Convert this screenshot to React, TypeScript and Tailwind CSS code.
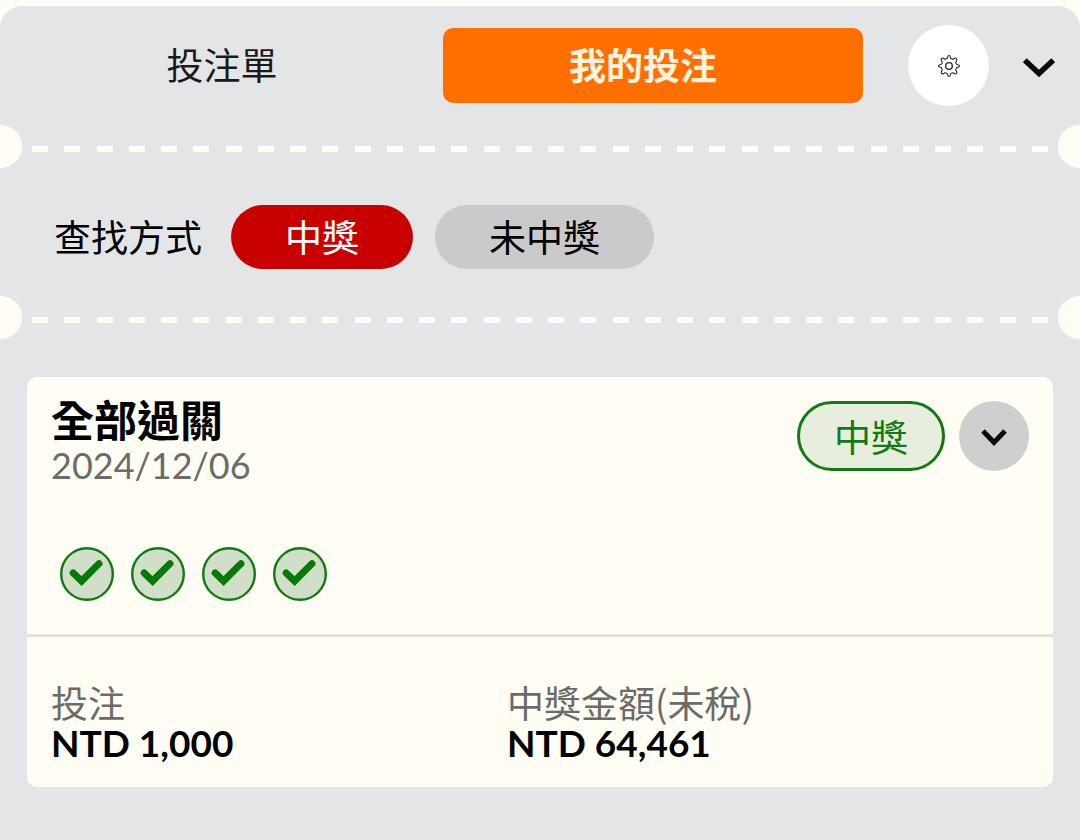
import React, { useState } from "react";
import clsx from "clsx";

const DASHES = Array.from({ length: 32 });
const LEGS = [1, 2, 3, 4];

const details = [
  { label: "投注", value: "NTD 1,000" },
  { label: "中獎金額(未稅)", value: "NTD 64,461" },
];

const GearIcon = () => (
  <svg viewBox="0 0 24 24" className="size-6" fill="none" stroke="#222" strokeWidth="1.1" strokeLinejoin="round" aria-hidden="true">
    <path d="M10.7 3.2Q10.8 1.5 12 1.5T13.3 3.2Q13.5 4.6 14.9 5.1Q16 5.5 17.1 4.5Q18.5 3.5 19.4 4.5T19.4 6.9Q18.4 8 18.9 9.1Q19.4 10.5 20.8 10.7Q22.5 10.8 22.5 12T20.8 13.3Q19.4 13.5 18.9 14.9Q18.4 16 19.4 17.1Q20.4 18.5 19.4 19.4T17.1 19.5Q16 18.5 14.9 18.9Q13.5 19.4 13.3 20.8Q13.2 22.5 12 22.5T10.7 20.8Q10.5 19.4 9.1 18.9Q8 18.5 6.9 19.5Q5.5 20.4 4.6 19.4T4.6 17.1Q5.6 16 5.1 14.9Q4.6 13.5 3.2 13.3Q1.5 13.2 1.5 12T3.2 10.7Q4.6 10.5 5.1 9.1Q5.6 8 4.6 6.9Q3.6 5.5 4.6 4.5T6.9 4.5Q8 5.5 9.1 5.1Q10.5 4.6 10.7 3.2Z" />
    <circle cx="12" cy="12" r="3.3" strokeWidth="1.3" />
  </svg>
);

const CheckBadge = () => (
  <svg viewBox="0 0 54 54" className="size-[54px]" fill="none" aria-hidden="true">
    <circle cx="27" cy="27" r="25.8" fill="#d2dfc8" stroke="#107a13" strokeWidth="2.4" />
    <path d="M13.2 26L21.6 34L39 16.6" stroke="#047a04" strokeWidth="7" strokeLinecap="round" strokeLinejoin="miter" />
  </svg>
);

// Ticket-style tear line with a notch on both edges
const TearLine = () => (
  <div className="flex h-[43px] items-center gap-[10px] overflow-hidden" aria-hidden="true">
    <span className="-ml-[21px] size-[43px] shrink-0 rounded-full bg-[#fffdf4]" />
    <div className="flex flex-1 justify-between pt-[5px]">
      {DASHES.map((_, i) => (
        <span key={i} className="h-[6px] w-4 bg-[#fffdf4]" />
      ))}
    </div>
    <span className="-mr-[21px] size-[43px] shrink-0 rounded-full bg-[#fffdf4]" />
  </div>
);

const App = () => {
  const [tab, setTab] = useState("mine");
  const [filter, setFilter] = useState("won");

  const tabClass = (name: string) =>
    clsx(
      "h-[75px] rounded-[10px] text-[37px] leading-[44px]",
      tab === name ? "bg-[#ff6f00] pr-5 font-bold text-[#fff3e0]" : "text-[#1a1a1a]"
    );

  const filterClass = (name: string) =>
    clsx(
      "h-16 rounded-full px-[54px] pt-[2px]",
      filter === name ? "bg-[#c80000] text-white" : "bg-[#cacaca] text-black"
    );

  return (
    <div className="min-h-screen bg-[#fffdf4] pt-[6px] font-[Lato,'Noto_Sans_CJK_TC',sans-serif] text-black">
      <div className="min-h-[calc(100vh-6px)] rounded-t-[22px] bg-[#e4e5e7] pb-12">
        {/* Header */}
        <header className="flex items-center pt-[19px] pr-[25px] pb-[19px] pl-3">
          <div className="grid flex-1 grid-cols-2 gap-[11px]">
            <button type="button" onClick={() => setTab("slip")} className={tabClass("slip")}>
              投注單
            </button>
            <button type="button" onClick={() => setTab("mine")} className={tabClass("mine")}>
              我的投注
            </button>
          </div>
          <button
            type="button"
            aria-label="設定"
            className="ml-[45px] flex size-[81px] items-center justify-center rounded-full bg-white"
          >
            <GearIcon />
          </button>
          <button type="button" aria-label="收合" className="ml-[34px] pt-1">
            <svg viewBox="0 0 32 20" className="h-5 w-8" fill="none" stroke="#0a0a0a" strokeWidth="5.6" aria-hidden="true">
              <path d="M1.8 2.2L16 15.5L30.2 2.2" />
            </svg>
          </button>
        </header>

        <TearLine />

        {/* Filter */}
        <div className="flex items-center pt-[37px] pb-[27px] pl-[54px] text-[37px] leading-[44px]">
          <span className="mr-[29px] pt-[2px]">查找方式</span>
          <div className="flex gap-[22px]">
            <button type="button" onClick={() => setFilter("won")} className={filterClass("won")}>
              中獎
            </button>
            <button type="button" onClick={() => setFilter("lost")} className={filterClass("lost")}>
              未中獎
            </button>
          </div>
        </div>

        <TearLine />

        {/* Bet card */}
        <article className="mx-[27px] mt-[38px] rounded-[10px] bg-[#fffdf4]">
          <div className="flex items-start justify-between px-6 pt-[22px]">
            <div>
              <h2 className="text-[43px] leading-[44px] font-bold">全部過關</h2>
              <p className="text-[36px] leading-[44px] text-[#6b6b68]">2024/12/06</p>
            </div>
            <div className="flex items-center gap-[14px] pt-[2px]">
              <span className="flex h-[70px] items-center rounded-full border-3 border-[#107a13] bg-[#e7eedd] px-[34px] pt-[3px] text-[37px] leading-[44px] text-[#107a13]">
                中獎
              </span>
              <button
                type="button"
                aria-label="展開"
                className="flex size-[70px] items-center justify-center rounded-full bg-[#cfcfcf] pt-[3px]"
              >
                <svg viewBox="0 0 26 18" className="h-[18px] w-[26px]" fill="none" stroke="#0a0a0a" strokeWidth="5" aria-hidden="true">
                  <path d="M2 2L13 13.4L24 2" />
                </svg>
              </button>
            </div>
          </div>

          <div className="mt-[60px] flex gap-[17px] pb-[33px] pl-[33px]">
            {LEGS.map((leg) => (
              <CheckBadge key={leg} />
            ))}
          </div>

          <dl className="grid grid-cols-[456px_1fr] border-t-3 border-[#e4e3dc] px-6 pt-[45px] pb-6">
            {details.map((item) => (
              <div key={item.label} className="flex flex-col gap-px">
                <dt className="font-['Noto_Sans_CJK_TC',sans-serif] text-[37px] leading-[40px] text-[#6b6b68]">
                  {item.label}
                </dt>
                <dd className="text-[37px] leading-[40px] font-bold">{item.value}</dd>
              </div>
            ))}
          </dl>
        </article>
      </div>
    </div>
  );
};

export default App;
